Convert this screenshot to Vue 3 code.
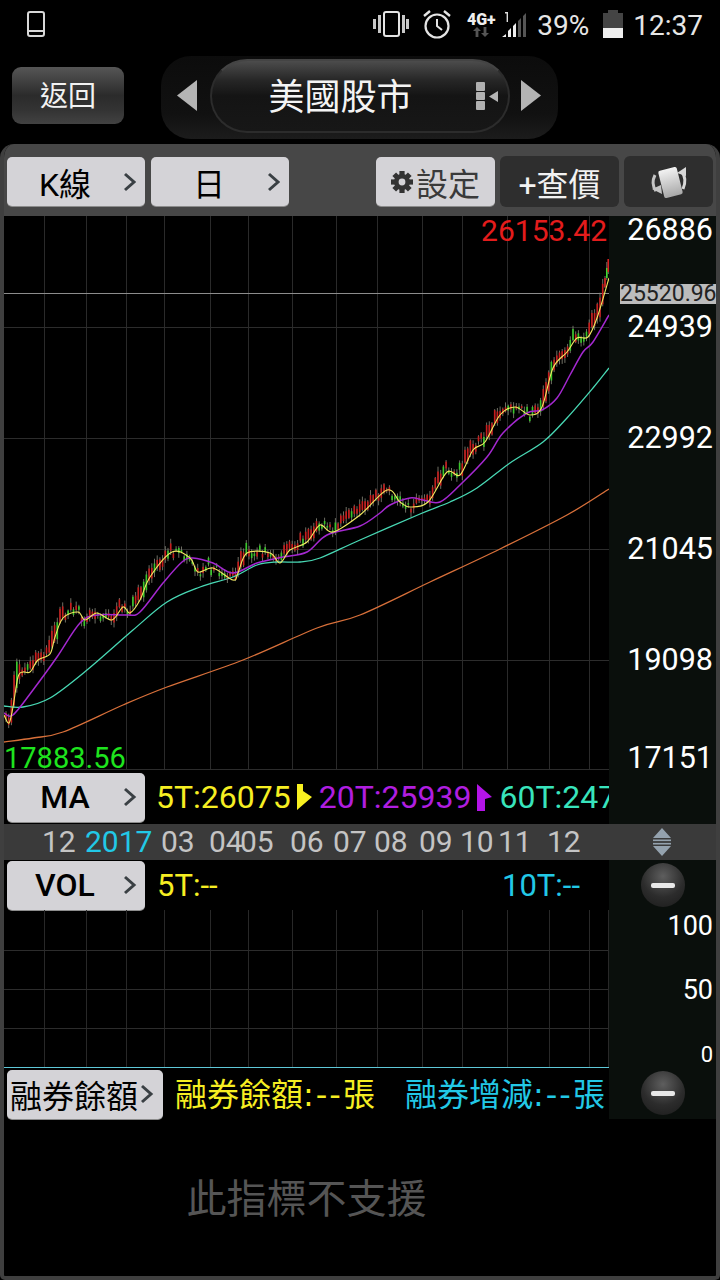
<template>
  <div class="page">
    <div class="status">
      <svg class="st-phone" width="18" height="26" viewBox="0 0 18 26">
        <rect x="1" y="1" width="16" height="24" rx="2" fill="none" stroke="#d8d8d8" stroke-width="2" />
        <line x1="1" y1="20" x2="17" y2="20" stroke="#d8d8d8" stroke-width="2" />
      </svg>
      <div class="st-right">
        <svg width="36" height="28" viewBox="0 0 36 28">
          <rect x="11" y="2" width="15" height="24" rx="2" fill="none" stroke="#e4e4e4" stroke-width="2" />
          <rect x="0" y="9" width="3" height="10" fill="#c8c8c8" />
          <rect x="5" y="5" width="3" height="18" fill="#c8c8c8" />
          <rect x="29" y="5" width="3" height="18" fill="#c8c8c8" />
          <rect x="33" y="9" width="3" height="10" fill="#c8c8c8" />
        </svg>
        <svg class="st-alarm" width="30" height="30" viewBox="0 0 30 30">
          <circle cx="15" cy="17" r="11.5" fill="none" stroke="#e4e4e4" stroke-width="2.2" />
          <path d="M15 10 V17 L20 21" fill="none" stroke="#e4e4e4" stroke-width="2" />
          <path d="M2 7 L8 2 M28 7 L22 2" stroke="#e4e4e4" stroke-width="2.4" />
        </svg>
        <div class="st-net">
          <span class="st-4g">4G+</span>
          <svg width="16" height="10" viewBox="0 0 16 10">
            <path d="M4 0 L8 4 H5.4 V10 H2.6 V4 H0 Z M12 10 L8 6 H10.6 V0 H13.4 V6 H16 Z" fill="#555" />
          </svg>
        </div>
        <svg class="st-signal" width="26" height="27" viewBox="0 0 26 27">
          <path d="M0 26 L4 26 L4 23 Z M6 26 V20 L9 17 V26 Z M11 26 V15 L14 12 V26 Z" fill="#eee" />
          <path d="M16 26 V10 L19 7 V26 Z M21 26 V5 L24 2 V26 Z" fill="#555" />
          <path d="M3 1 H6 V11 H4.6 V2.4 H3 Z" fill="#ddd" />
        </svg>
        <span class="st-text st-pct">39%</span>
        <div class="st-batt"><div class="st-tip"></div><div class="st-cell"><div class="st-fill"></div></div></div>
        <span class="st-text st-time">12:37</span>
      </div>
    </div>

    <div class="nav">
      <div class="back">返回</div>
      <div class="market">
        <svg class="arrow" width="20" height="31" viewBox="0 0 20 31"><path d="M20 0 V31 L0 15.5 Z" fill="#b4b4b4" /></svg>
        <div class="pill">
          <span class="pill-title">美國股市</span>
          <div class="grip"><i></i><i></i><i></i></div>
          <svg width="9" height="11" viewBox="0 0 9 11"><path d="M9 0 V11 L0 5.5 Z" fill="#b4b4b4" /></svg>
        </div>
        <svg class="arrow" width="20" height="31" viewBox="0 0 20 31"><path d="M0 0 V31 L20 15.5 Z" fill="#b4b4b4" /></svg>
      </div>
    </div>

    <div class="panel">
      <div class="toolbar">
        <div class="btn wide">
          <span class="btn-label">K線</span>
          <svg class="chev" width="14" height="20" viewBox="0 0 14 20"><path d="M2 2 L11 10 L2 18" fill="none" stroke="#3a4044" stroke-width="3" /></svg>
        </div>
        <div class="btn wide">
          <span class="btn-label">日</span>
          <svg class="chev" width="14" height="20" viewBox="0 0 14 20"><path d="M2 2 L11 10 L2 18" fill="none" stroke="#3a4044" stroke-width="3" /></svg>
        </div>
        <div class="spacer"></div>
        <div class="btn action">
          <svg class="gear" width="22" height="22" viewBox="-11 -11 22 22">
            <rect v-for="a in [0, 45, 90, 135]" :key="a" x="-2.6" y="-11" width="5.2" height="22" fill="#333" :transform="`rotate(${a})`" />
            <circle r="8" fill="#333" />
            <circle r="3.4" fill="#d4d3d7" />
          </svg>
          <span>設定</span>
        </div>
        <div class="dark-btn quote">+查價</div>
        <div class="dark-btn rotate">
          <svg width="46" height="36" viewBox="0 0 46 36">
            <defs>
              <linearGradient id="card" x1="0" y1="0" x2="0" y2="1">
                <stop offset="0" stop-color="#f2f2f2" />
                <stop offset="1" stop-color="#a8a8a8" />
              </linearGradient>
            </defs>
            <path d="M9 11 C6 17 7 23 10 27" fill="none" stroke="#c4c4c4" stroke-width="3" />
            <path d="M6 25 L16 30 L15 21 Z" fill="#c4c4c4" />
            <path d="M37 25 C40 18 39 12 36 8" fill="none" stroke="#d8d8d8" stroke-width="3" />
            <path d="M31 9 L40 3 L40 12 Z" fill="#d8d8d8" />
            <rect x="15" y="4.5" width="19" height="28" rx="2" fill="url(#card)" transform="rotate(-14 24.5 18.5)" />
          </svg>
        </div>
      </div>

      <div class="row chart-row">
        <div class="main chart">
          <svg width="605" height="554" viewBox="4 216 605 554">
            <line v-for="x in gridX" :key="'v' + x" :x1="x" y1="216" :x2="x" y2="770" stroke="#2a2a2a" />
            <line v-for="y in gridY" :key="'h' + y" x1="4" :y1="y" x2="609" :y2="y" stroke="#2c2c2c" />
            <line x1="4" y1="293.5" x2="609" y2="293.5" stroke="#8c8c8c" />
            <g v-for="c in candles" :key="c.x">
              <line :x1="c.x" :y1="c.hi" :x2="c.x" :y2="c.lo" stroke="#8a8a7c" stroke-width="0.8" />
              <rect :x="c.x - 0.8" :y="c.top" width="1.6" :height="c.h" :fill="c.color" />
            </g>
            <path :d="orangePath" fill="none" stroke="#d8703a" stroke-width="1.3" />
            <path :d="tealPath" fill="none" stroke="#48d8b4" stroke-width="1.3" />
            <path :d="purplePath" fill="none" stroke="#a428d0" stroke-width="1.5" />
            <path :d="yellowPath" fill="none" stroke="#f2ea60" stroke-width="1.1" />
          </svg>
          <span class="extreme high">26153.42</span>
          <span class="extreme low">17883.56</span>
        </div>
        <div class="side">
          <span v-for="t in priceTicks" :key="t.label" class="tick" :style="{ top: t.y + 'px' }">{{ t.label }}</span>
          <span class="last-price">25520.96</span>
        </div>
      </div>

      <div class="row ma-row">
        <div class="main ind clip">
          <div class="btn wide">
            <span class="btn-label strong">MA</span>
            <svg class="chev" width="14" height="20" viewBox="0 0 14 20"><path d="M2 2 L11 10 L2 18" fill="none" stroke="#3a4044" stroke-width="3" /></svg>
          </div>
          <div class="ma-values">
            <span class="yellow">5T:26075</span>
            <svg class="flag" width="15" height="26" viewBox="0 0 15 26"><path d="M0 0 H6 V7 L15 13 L0 26 Z" fill="#f8f020" /></svg>
            <span class="purple">20T:25939</span>
            <svg class="flag" width="15" height="27" viewBox="0 0 15 27"><path d="M0 0 L15 13 L8 15 V27 H0 Z" fill="#b414e8" /></svg>
            <span class="teal">60T:24710</span>
          </div>
        </div>
        <div class="side"></div>
      </div>

      <div class="date-bar">
        <div class="dates">
          <span v-for="d in dates" :key="d.left" class="date" :class="{ year: d.year }" :style="{ left: d.left + 'px' }">{{ d.label }}</span>
        </div>
        <svg class="scale" width="20" height="28" viewBox="0 0 20 28">
          <path d="M10 0 L19 10 H1 Z M10 28 L19 18 H1 Z" fill="#94a2ae" />
          <rect x="1" y="11.5" width="18" height="1.6" fill="#94a2ae" />
          <rect x="1" y="14.9" width="18" height="1.6" fill="#94a2ae" />
        </svg>
      </div>

      <div class="row vol-row">
        <div class="main ind">
          <div class="btn wide">
            <span class="btn-label strong">VOL</span>
            <svg class="chev" width="14" height="20" viewBox="0 0 14 20"><path d="M2 2 L11 10 L2 18" fill="none" stroke="#3a4044" stroke-width="3" /></svg>
          </div>
          <span class="vol-a yellow">5T:--</span>
          <span class="vol-b cyan">10T:--</span>
        </div>
        <div class="side side-btn"><div class="minus"><i></i></div></div>
      </div>

      <div class="row low-row">
        <div class="main">
          <svg width="605" height="157" viewBox="4 910 605 157">
            <line v-for="x in gridX" :key="'lv' + x" :x1="x" y1="910" :x2="x" y2="1067" stroke="#282828" />
            <line v-for="y in [950.5, 989.5, 1028.5]" :key="'lh' + y" x1="4" :y1="y" x2="609" :y2="y" stroke="#2c2c2c" />
            <line x1="608.5" y1="910" x2="608.5" y2="1067" stroke="#282828" />
          </svg>
        </div>
        <div class="side">
          <span class="tick small" style="top: 16px">100</span>
          <span class="tick small" style="top: 80px">50</span>
          <span class="tick zero" style="top: 145px">0</span>
        </div>
      </div>

      <div class="row short-row">
        <div class="main ind short">
          <div class="btn short-btn">
            <span class="btn-label">融券餘額</span>
            <svg class="chev" width="14" height="20" viewBox="0 0 14 20"><path d="M2 2 L11 10 L2 18" fill="none" stroke="#3a4044" stroke-width="3" /></svg>
          </div>
          <span class="short-a yellow">融券餘額<span class="dashes">:--</span>張</span>
          <span class="short-b cyan">融券增減<span class="dashes">:--</span>張</span>
        </div>
        <div class="side side-btn"><div class="minus"><i></i></div></div>
      </div>

      <div class="empty">
        <span>此指標不支援</span>
      </div>
    </div>
  </div>
</template>

<script setup>
// rough trace of the moving averages, page coordinates
const yellow = [[4,715],[9,723],[13,707],[18,677],[23,672],[30,672],[38,660],[50,654],[55,637],[63,618],[78,612],[85,620],[97,613],[112,620],[123,607],[130,613],[140,600],[150,577],[172,552],[190,558],[198,572],[213,568],[233,580],[238,573],[247,553],[270,553],[280,563],[290,550],[307,542],[320,525],[333,532],[360,515],[387,490],[400,502],[410,507],[428,502],[447,472],[460,475],[473,450],[485,442],[500,415],[515,407],[530,415],[542,407],[553,368],[567,352],[577,338],[588,337],[597,318],[609,278]]
const purple = [[4,713],[13,715],[33,690],[57,657],[80,623],[97,615],[127,615],[140,612],[163,583],[182,562],[193,558],[213,563],[233,573],[257,563],[283,557],[307,552],[327,535],[360,526],[380,513],[390,505],[410,498],[423,500],[440,502],[460,485],[487,457],[503,433],[527,413],[542,410],[557,398],[570,375],[583,352],[593,342],[609,315]]
const teal = [[4,706],[23,707],[50,698],[87,670],[133,630],[167,602],[200,587],[233,577],[257,565],[277,562],[300,562],[320,558],[360,540],[420,514],[450,502],[477,488],[510,463],[543,442],[567,418],[593,388],[609,368]]
const orange = [[4,742],[33,738],[63,732],[123,705],[167,687],[243,660],[317,628],[360,615],[430,582],[500,549],[567,515],[609,489]]

function smooth(pts) {
  let d = `M${pts[0][0]} ${pts[0][1]}`
  for (let i = 0; i < pts.length - 1; i++) {
    const p0 = pts[i - 1] || pts[i]
    const p1 = pts[i]
    const p2 = pts[i + 1]
    const p3 = pts[i + 2] || p2
    const c1x = p1[0] + (p2[0] - p0[0]) / 6
    const c1y = p1[1] + (p2[1] - p0[1]) / 6
    const c2x = p2[0] - (p3[0] - p1[0]) / 6
    const c2y = p2[1] - (p3[1] - p1[1]) / 6
    d += ` C${c1x.toFixed(1)} ${c1y.toFixed(1)} ${c2x.toFixed(1)} ${c2y.toFixed(1)} ${p2[0]} ${p2[1]}`
  }
  return d
}

const yellowPath = smooth(yellow)
const purplePath = smooth(purple)
const tealPath = smooth(teal)
const orangePath = smooth(orange)

function at(line, x) {
  for (let i = 0; i < line.length - 1; i++) {
    if (x <= line[i + 1][0]) {
      const t = (x - line[i][0]) / (line[i + 1][0] - line[i][0])
      return line[i][1] + (line[i + 1][1] - line[i][1]) * t
    }
  }
  return line[line.length - 1][1]
}

let seed = 7
function rand() {
  seed = (seed * 16807) % 2147483647
  return seed / 2147483647
}

function makeCandles() {
  const list = []
  for (let x = 6; x < 603; x += 2.7) {
    const base = at(yellow, x)
    const slope = at(yellow, Math.max(4, x - 3)) - at(yellow, x + 3)
    const rising = slope > 1.5
    const red = rising ? rand() < 0.85 : rand() < 0.4
    const h = 1.5 + rand() * 4 + Math.max(0, slope) * 0.8
    const top = base - h * 0.6 + (rand() - 0.5) * 10 - (rising ? 3 : 0)
    list.push({
      x: +x.toFixed(1),
      top: +top.toFixed(1),
      h: +h.toFixed(1),
      hi: +(top - 1 - rand() * 4).toFixed(1),
      lo: +(top + h + 1 + rand() * 4).toFixed(1),
      color: red ? '#c81c1c' : '#38c82a',
    })
  }
  // last few bars sit above the line
  list.push({ x: 605, top: 278, h: 9, hi: 276, lo: 288, color: '#d81e1e' })
  list.push({ x: 606.8, top: 268, h: 10, hi: 262, lo: 280, color: '#3edc2c' })
  list.push({ x: 608.3, top: 259, h: 13, hi: 259, lo: 274, color: '#d81e1e' })
  return list
}

const candles = makeCandles()

const gridX = [44.5, 86.5, 126.5, 164.5, 210.5, 248.5, 292.5, 336.5, 377.5, 422.5, 462.5, 507.5, 549.5, 589.5]
const gridY = [327.5, 438.5, 549.5, 660.5, 769.5]

const priceTicks = [
  { label: '26886', y: 14 },
  { label: '24939', y: 111 },
  { label: '22992', y: 222 },
  { label: '21045', y: 333 },
  { label: '19098', y: 444 },
  { label: '17151', y: 542 },
]

const dates = [
  { label: '12', left: 38 },
  { label: '2017', left: 81, year: true },
  { label: '03', left: 157 },
  { label: '04', left: 205 },
  { label: '05', left: 236 },
  { label: '06', left: 286 },
  { label: '07', left: 329 },
  { label: '08', left: 370 },
  { label: '09', left: 415 },
  { label: '10', left: 456 },
  { label: '11', left: 494 },
  { label: '12', left: 543 },
]
</script>

<style scoped>
.page {
  width: 720px;
  height: 1280px;
  background: #000;
  overflow: hidden;
  font-family: Roboto, "Noto Sans CJK TC", sans-serif;
  color: #fff;
}

.status {
  height: 48px;
  display: flex;
  justify-content: space-between;
  align-items: center;
  padding: 0 17px 0 27px;
  box-sizing: border-box;
}

.st-right {
  display: flex;
  align-items: center;
}

.st-alarm {
  margin-left: 13px;
  margin-top: -1px;
}

.st-net {
  width: 32px;
  margin-left: 13px;
  display: flex;
  flex-direction: column;
  align-items: center;
}

.st-4g {
  font-size: 16px;
  line-height: 15px;
  font-weight: 900;
  color: #eee;
}

.st-signal {
  margin-left: 5px;
}

.st-text {
  font-size: 28px;
  line-height: 32px;
  margin-top: 3px;
  color: #e6e6e6;
}

.st-pct {
  margin-left: 9px;
}

.st-batt {
  margin-left: 14px;
  width: 20px;
  display: flex;
  flex-direction: column;
  align-items: center;
}

.st-tip {
  width: 10px;
  height: 3px;
  background: #444;
}

.st-cell {
  width: 20px;
  height: 25px;
  background: #444;
  display: flex;
  align-items: flex-end;
}

.st-fill {
  width: 100%;
  height: 10px;
  background: #eee;
}

.st-time {
  margin-left: 10px;
}

.nav {
  height: 96px;
  display: flex;
  align-items: flex-start;
  padding-left: 12px;
}

.back {
  margin-top: 19px;
  width: 112px;
  height: 57px;
  border-radius: 9px;
  background: linear-gradient(#565656, #2b2b2b 50%, #333 75%, #424242);
  text-align: center;
  font-size: 28px;
  line-height: 60px;
  color: #f2f2f2;
}

.market {
  margin: 8px 0 0 37px;
  width: 397px;
  height: 83px;
  box-sizing: border-box;
  border-radius: 30px;
  background: linear-gradient(#0c0c0c, #111 70%, #1c1c1c);
  display: flex;
  align-items: center;
  padding-left: 16px;
}

.pill {
  margin: -3px 11px 0 13px;
  width: 300px;
  height: 74px;
  box-sizing: border-box;
  border: 2px solid #2c2c2c;
  border-top-color: #444;
  border-radius: 37px;
  background: linear-gradient(#4c4c4c, #262626 28%, #141414 50%, #171717);
  display: flex;
  align-items: center;
  padding-right: 10px;
}

.pill-title {
  width: 258px;
  margin-top: -4px;
  text-align: center;
  font-size: 36px;
  color: #f4f4f4;
}

.grip {
  width: 9px;
  margin: 0 4px 0 7px;
  display: flex;
  flex-direction: column;
  gap: 1px;
}

.grip i {
  display: block;
  height: 8.5px;
  background: #b0b0b0;
  border-radius: 1px;
}

.arrow {
  flex: none;
  margin-top: -4px;
}

.panel {
  height: 1136px;
  box-sizing: border-box;
  border: 4px solid #3f3f3f;
  border-top: none;
  border-radius: 14px 14px 5px 5px;
  background: #000;
  overflow: hidden;
}

.toolbar {
  height: 72px;
  box-sizing: border-box;
  padding: 13px 3px 0;
  background: #474747;
  display: flex;
  align-items: flex-start;
  gap: 5px;
}

.spacer {
  flex: 1;
}

.btn {
  height: 49px;
  border-radius: 5px;
  background: #d4d3d7;
  box-shadow: 0 1px 0 #8c8c8c;
  color: #000;
  display: flex;
  align-items: center;
  flex: none;
  box-sizing: border-box;
}

.wide {
  width: 138px;
}

.wide + .wide {
  margin-left: 1px;
}

.btn-label {
  flex: 1;
  text-align: center;
  font-size: 32px;
}

.strong {
  font-weight: 500;
}

.chev {
  flex: none;
  margin-right: 8px;
}

.action {
  width: 119px;
  justify-content: center;
  font-size: 32px;
  color: #3a3a3a;
  gap: 3px;
}

.dark-btn {
  height: 51px;
  margin-top: -1px;
  border-radius: 6px;
  background: #2e2e2e;
  display: flex;
  align-items: center;
  justify-content: center;
  flex: none;
  color: #f2f2f2;
}

.quote {
  width: 119px;
  font-size: 32px;
}

.rotate {
  width: 89px;
}

.row {
  display: flex;
}

.main {
  width: 605px;
  flex: none;
  position: relative;
}

.main svg {
  display: block;
}

.clip {
  overflow: hidden;
}

.side {
  width: 107px;
  flex: none;
  position: relative;
  background: #0a0f0c;
}

.chart-row {
  height: 554px;
}

.extreme {
  position: absolute;
  font-size: 30px;
  line-height: 30px;
}

.high {
  right: 2px;
  top: 0;
  color: #e41c1c;
}

.low {
  left: 0;
  top: 527px;
  font-size: 29px;
  color: #1ee41e;
}

.tick {
  position: absolute;
  right: 3px;
  transform: translateY(-50%);
  font-size: 30.5px;
  line-height: 30px;
  color: #fff;
}

.tick.small {
  font-size: 27px;
}

.tick.zero {
  font-size: 22px;
}

.last-price {
  position: absolute;
  left: 11px;
  right: 0;
  top: 68px;
  height: 20px;
  background: #bcbcbc;
  color: #222;
  font-size: 23px;
  line-height: 20px;
  text-align: center;
}

.ma-row {
  height: 54px;
}

.ind {
  display: flex;
  align-items: center;
  padding-left: 3px;
  box-sizing: border-box;
}

.ma-values {
  margin-left: 11px;
  display: flex;
  align-items: center;
  white-space: nowrap;
  font-size: 32px;
}

.flag {
  margin: 0 7px 0 6px;
}

.yellow {
  color: #f6ee22;
}

.purple {
  color: #b01ee0;
}

.teal {
  color: #38e4bc;
}

.cyan {
  color: #22c8e6;
}

.date-bar {
  height: 36px;
  background: #3a3a3a;
  display: flex;
  align-items: center;
}

.dates {
  width: 605px;
  height: 36px;
  position: relative;
  flex: none;
}

.date {
  position: absolute;
  top: 0;
  font-size: 30px;
  line-height: 36px;
  color: #c4c4c4;
}

.date.year {
  color: #22c8e6;
}

.scale {
  margin-left: 43px;
}

.vol-row {
  height: 50px;
}

.vol-a {
  margin-left: 12px;
  font-size: 31px;
}

.vol-b {
  position: absolute;
  left: 498px;
  font-size: 31px;
}

.side-btn {
  display: flex;
  justify-content: center;
  align-items: center;
}

.minus {
  width: 44px;
  height: 44px;
  border-radius: 50%;
  background: radial-gradient(circle at 50% 30%, #5e5e5e, #2c2c2c 55%, #1a1a1a);
  display: flex;
  align-items: center;
  justify-content: center;
}

.minus i {
  display: block;
  width: 24px;
  height: 5px;
  border-radius: 2px;
  background: #e8e8e8;
}

.low-row {
  height: 157px;
}

.short-row {
  height: 52px;
}

.short {
  border-top: 1px solid #5ec8d8;
  padding-top: 1px;
}

.short-btn {
  width: 156px;
  height: 49px;
}

.short-btn .btn-label {
  font-size: 32px;
  flex: none;
  margin-left: 3px;
  white-space: nowrap;
}

.short-btn .chev {
  margin: 0 0 0 2px;
}

.short-a,
.short-b {
  position: absolute;
  top: 5px;
  font-size: 32px;
  line-height: 44px;
  white-space: nowrap;
}

.dashes {
  font-family: "DejaVu Sans", sans-serif;
  letter-spacing: 2px;
}

.short-a {
  left: 171px;
}

.short-b {
  left: 401px;
}

.empty {
  width: 605px;
  height: 157px;
  display: flex;
  align-items: center;
  justify-content: center;
  font-size: 40px;
  padding-bottom: 4px;
  box-sizing: border-box;
  color: #555;
}
</style>
